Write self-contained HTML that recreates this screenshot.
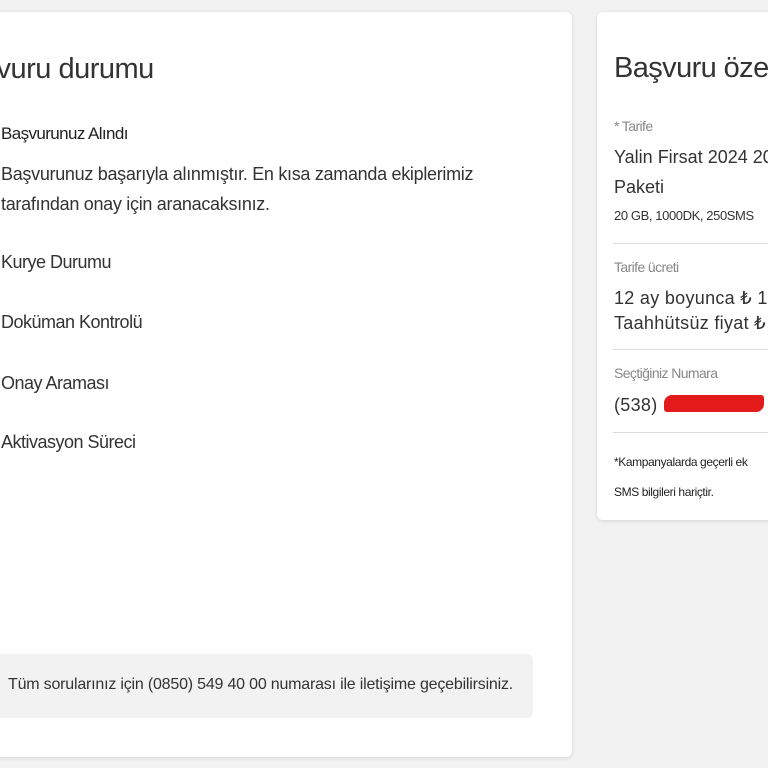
<!DOCTYPE html>
<html><head><meta charset="utf-8"><style>
body{margin:0;width:768px;height:768px;background:#f2f2f2;position:relative;overflow:hidden;font-family:"Liberation Sans",sans-serif;color:#333}
.card{position:absolute;background:#fff;border-radius:6px;box-shadow:0 1px 4px rgba(0,0,0,.12);overflow:hidden}
.t{position:absolute;white-space:nowrap}
.hr{position:absolute;left:16px;right:0;height:1px;background:#ddd}
</style></head><body>
<div class="card" style="left:-20px;top:12px;width:592px;height:745px"></div>
<div class="t" style="left:-52px;top:53px;font-size:29px;color:#333;letter-spacing:-0.5px">Başvuru durumu</div>
<div class="t" style="left:1px;top:124px;font-size:17px;letter-spacing:-0.6px;color:#222">Başvurunuz Alındı</div>
<div class="t" style="left:1px;top:159px;font-size:18px;line-height:30px;letter-spacing:-0.3px">Başvurunuz başarıyla alınmıştır. En kısa zamanda ekiplerimiz<br>tarafından onay için aranacaksınız.</div>
<div class="t" style="left:1px;top:252px;font-size:18px;letter-spacing:-0.5px">Kurye Durumu</div>
<div class="t" style="left:1px;top:312px;font-size:18px;letter-spacing:-0.5px">Doküman Kontrolü</div>
<div class="t" style="left:1px;top:373px;font-size:18px;letter-spacing:-0.5px">Onay Araması</div>
<div class="t" style="left:1px;top:432px;font-size:18px;letter-spacing:-0.5px">Aktivasyon Süreci</div>
<div style="position:absolute;left:-10px;top:654px;width:543px;height:64px;background:#f2f2f2;border-radius:6px"></div>
<div class="t" style="left:8px;top:676px;font-size:16px;letter-spacing:-0.2px;color:#333">Tüm sorularınız için (0850) 549 40 00 numarası ile iletişime geçebilirsiniz.</div>

<div class="card" style="left:597px;top:12px;width:200px;height:508px">
<div class="t" style="left:17px;top:40px;font-size:29px;letter-spacing:-0.6px">Başvuru özeti</div>
<div class="t" style="left:17px;top:106px;font-size:14px;color:#888;letter-spacing:-0.6px">* Tarife</div>
<div class="t" style="left:17px;top:130px;font-size:18px;line-height:30px">Yalin Firsat 2024 20GB<br>Paketi</div>
<div class="t" style="left:17px;top:196px;font-size:13px;letter-spacing:-0.4px;color:#333">20 GB, 1000DK, 250SMS</div>
<div class="hr" style="top:231px"></div>
<div class="t" style="left:17px;top:247px;font-size:14px;color:#888;letter-spacing:-0.6px">Tarife ücreti</div>
<div class="t" style="left:17px;top:274px;font-size:18px;line-height:25px;letter-spacing:0.3px">12 ay boyunca ₺ 1<br>Taahhütsüz fiyat ₺</div>
<div class="hr" style="top:337px"></div>
<div class="t" style="left:17px;top:353px;font-size:14px;color:#888;letter-spacing:-0.6px">Seçtiğiniz Numara</div>
<div class="t" style="left:17px;top:383px;font-size:18px;letter-spacing:0.3px">(538)</div>
<div style="position:absolute;left:67px;top:383px;width:100px;height:17px;background:#e31b1b;border-radius:8px 3px 8px 3px"></div>
<div class="hr" style="top:420px"></div>
<div class="t" style="left:17px;top:443px;font-size:12px;letter-spacing:-0.4px;color:#222">*Kampanyalarda geçerli ek</div>
<div class="t" style="left:17px;top:473px;font-size:12px;letter-spacing:-0.4px;color:#222">SMS bilgileri hariçtir.</div>
</div>
</body></html>
